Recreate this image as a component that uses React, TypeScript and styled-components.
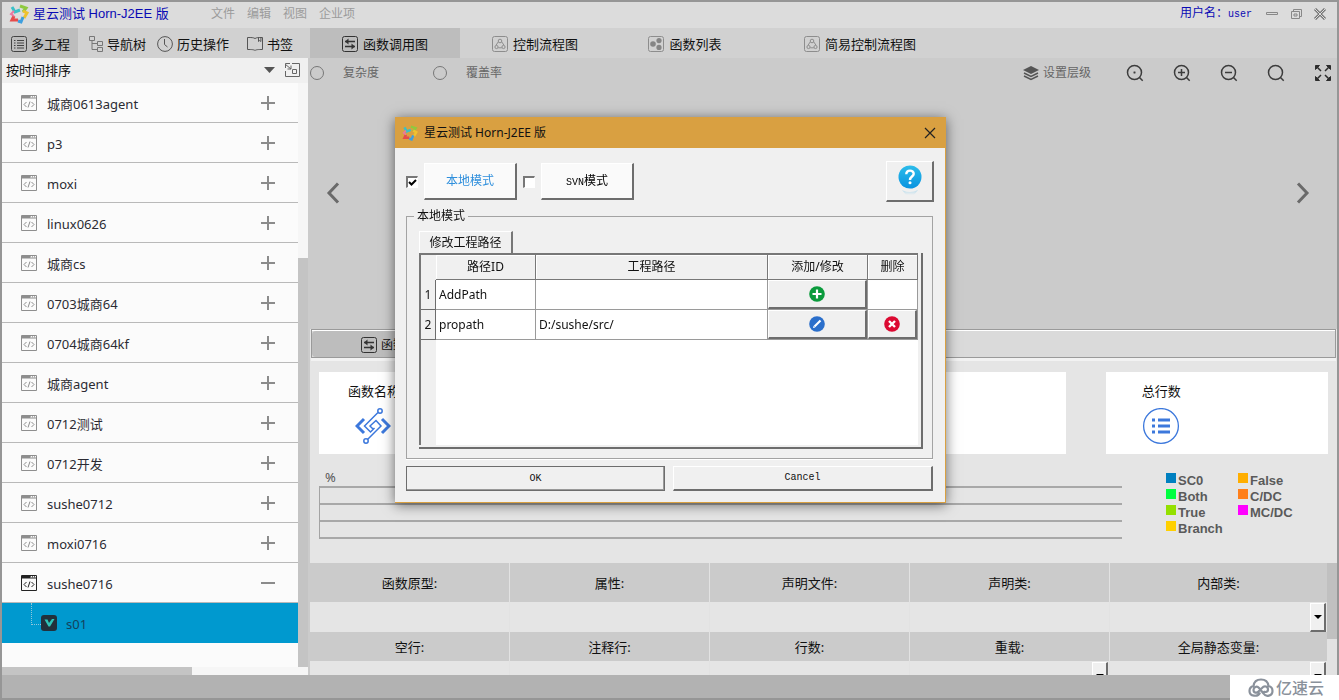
import React from "react";
import styled, { createGlobalStyle, css } from "styled-components";

const sans = `"Noto Sans", "Noto Sans CJK SC", sans-serif`;
const arial = `"Liberation Sans", "Noto Sans CJK SC", sans-serif`;
const mono = `"Liberation Mono", "Noto Sans CJK SC", monospace`;

const Global = createGlobalStyle`
  *, *::before, *::after { box-sizing: border-box; }
  body { margin: 0; font: 13px/20px ${sans}; color: #111; }
  button, select, input { font: inherit; color: inherit; margin: 0; }
  button { padding: 0; border: 0; background: none; }
  svg { display: block; flex: none; }
`;

const raised = css`
  border: solid;
  border-width: 1px 2px 2px 1px;
  border-color: #fff #6d6d6d #6d6d6d #fff;
`;

const Frame = styled.div`
  position: relative;
  display: flex;
  flex-direction: column;
  height: 100vh;
  min-height: 600px;
  border: 2px solid #969696;
  background: #cbcbcb;
  overflow: hidden;
`;

const TitleBar = styled.header`
  display: flex;
  align-items: center;
  flex: none;
  height: 26px;
  padding: 0 9px 3px 7px;
  background: #dcdcdc;
`;

const AppTitle = styled.h1`
  margin: 0 0 0 4px;
  width: 178px;
  font: 13px/20px ${arial};
  color: #0a0ab4;
`;

const Menu = styled.nav`
  display: flex;
  gap: 12px;
  flex: 1;
  font-size: 12px;
  color: #9b9b9b;
`;

const UserName = styled.span`
  font: 12px/20px ${mono};
  color: #0a0ab4;
  margin-right: 12px;
`;

const Narrow = styled.span`
  font: 10px/12px ${mono};
`;

const WindowControls = styled.div`
  display: flex;
  gap: 8px;
`;

const TabBar = styled.nav`
  display: flex;
  flex: none;
  height: 30px;
  background: #d1d1d1;
`;

const SideTabs = styled.div`
  display: flex;
  gap: 11px;
  flex: none;
  width: 308px;
`;

const SideTab = styled.button<{ $active?: boolean }>`
  display: flex;
  align-items: center;
  gap: 4px;
  padding: 2px 0 0;
  ${(p) => p.$active && css`padding: 2px 8px 0 9px; background: #bdbdbd;`}
  &:last-child { margin-left: 7px; }
`;

const ViewTab = styled.button<{ $active?: boolean; $wide?: boolean }>`
  display: flex;
  align-items: center;
  justify-content: center;
  gap: 5px;
  width: ${(p) => (p.$wide ? 200 : 150)}px;
  padding-top: 2px;
  background: ${(p) => (p.$active ? "#bdbdbd" : "transparent")};
`;

const Body = styled.div`
  display: flex;
  flex: 1;
  min-height: 0;
`;

const Sidebar = styled.aside`
  display: flex;
  flex-direction: column;
  flex: none;
  width: 306px;
  margin-right: 2px;
  background: #fbfbfb;
`;

const SortRow = styled.div`
  display: flex;
  align-items: center;
  flex: none;
  height: 25px;
  padding: 0 8px 1px 0;
  gap: 9px;
  background: #f0f0f0;
`;

const SortSelect = styled.select`
  appearance: none;
  flex: 1;
  padding: 0 0 0 4px;
  border: 0;
  background: none;
`;

const ListArea = styled.div`
  display: flex;
  flex: 1;
  min-height: 0;
`;

const ProjectList = styled.ul`
  flex: 1;
  margin: 0;
  padding: 0;
  list-style: none;
  overflow: hidden;
`;

const ProjectRow = styled.li`
  display: flex;
  align-items: center;
  gap: 10px;
  height: 40px;
  padding: 0 23px 0 19px;
  border-bottom: 1px solid #b9b9b9;
  color: #2b2b33;
`;

const RowName = styled.span`
  flex: 1;
  padding-top: 2px;
`;

const ChildRow = styled.li`
  display: flex;
  align-items: center;
  height: 40px;
  padding-left: 29px;
  background: #0099cf;
  color: #14425c;
`;

const Branch = styled.span`
  align-self: flex-start;
  width: 10px;
  height: 22px;
  border: dotted #8fc6dc;
  border-width: 0 0 1px 1px;
`;

const ChildName = styled.span`
  margin-left: 9px;
  padding-top: 2px;
`;

const VTrack = styled.div`
  display: flex;
  flex-direction: column;
  justify-content: flex-end;
  width: 10px;
  background: #f6f6f6;
`;

const VThumb = styled.div`
  height: 70%;
  background: #c4c4c4;
`;

const HTrack = styled.div`
  flex: none;
  height: 8px;
  background: #f6f6f6;
`;

const HThumb = styled.div`
  width: 62%;
  height: 100%;
  background: #c4c4c4;
`;

const Main = styled.main`
  display: flex;
  flex-direction: column;
  flex: 1;
  min-width: 0;
`;

const Canvas = styled.section`
  display: flex;
  flex-direction: column;
  flex: 271 1 0;
  min-height: 0;
`;

const Toolbar = styled.div`
  display: flex;
  align-items: center;
  height: 29px;
  padding-right: 5px;
  font-size: 12px;
  color: #666;
`;

const RadioLabel = styled.label`
  display: flex;
  align-items: center;
  gap: 19px;
  margin-right: 54px;
`;

const Radio = styled.input`
  appearance: none;
  width: 14px;
  height: 14px;
  border: 1px solid #777;
  border-radius: 50%;
`;

const Tools = styled.div`
  display: flex;
  align-items: center;
  gap: 29px;
  margin-left: auto;
`;

const LayerButton = styled.button`
  display: flex;
  align-items: center;
  gap: 4px;
  margin-right: 6px;
`;

const Pager = styled.div`
  display: flex;
  flex: 1;
  align-items: center;
  justify-content: space-between;
  padding: 0 27px 30px 16px;
`;

const Details = styled.section`
  display: flex;
  flex-direction: column;
  flex: 346 1 0;
  min-height: 0;
  background: #e5e5e5;
  overflow: hidden;
`;

const DetailTabs = styled.div`
  display: flex;
  flex: none;
  height: 29px;
  margin: 0 1px;
  border: 1px solid #9a9a9a;
  background: #dadada;
  box-shadow: inset 0 1px #fff, 0 3px #f2f2f2;
`;

const DetailTab = styled.button`
  display: flex;
  align-items: center;
  gap: 4px;
  width: 170px;
  margin-top: 1px;
  padding: 2px 0 0 49px;
  border-radius: 4px 0 0 4px;
  background: #bdbdbd;
  font-size: 12px;
`;

const Cards = styled.div`
  display: flex;
  flex: none;
  gap: 40px;
  margin: 14px 9px 0;
  height: 82px;
`;

const Card = styled.article`
  flex: 1;
  padding: 9px 0 0 36px;
  background: #fff;
`;

const CardTitle = styled.h2<{ $shift?: boolean }>`
  margin: 0 0 7px;
  ${(p) => p.$shift && css`margin-left: -7px;`}
  font: 13px/20px ${sans};
`;

const ChartRow = styled.div`
  display: flex;
  flex: none;
  height: 109px;
  padding-top: 13px;
`;

const Chart = styled.div`
  flex: 1;
  margin-left: 9px;
  color: #555;
`;

const Unit = styled.div`
  height: 19px;
  padding-left: 6px;
`;

const Grid = styled.div`
  height: 53px;
  border-left: 1px solid #a4a4a4;
  display: flex;
  flex-direction: column;
  justify-content: space-between;
`;

const GridLine = styled.div`
  height: 2px;
  background: #a8a8a8;
`;

const Legend = styled.ul`
  display: grid;
  grid-auto-flow: column;
  grid-template-rows: repeat(4, 16px);
  grid-template-columns: 72px 99px;
  flex: none;
  margin: 6px 0 0 44px;
  padding: 0;
  list-style: none;
  font: 700 13px/16px "Liberation Sans", sans-serif;
  color: #5a5a5a;
`;

const LegendItem = styled.li<{ $color: string }>`
  display: flex;
  gap: 2px;
  &::before {
    content: "";
    width: 10px;
    height: 10px;
    background: ${(p) => p.$color};
  }
`;

const InfoArea = styled.div`
  display: flex;
  flex: none;
`;

const InfoTable = styled.table`
  flex: 1;
  table-layout: fixed;
  border-collapse: separate;
  border-spacing: 0;
  th, td { padding: 0; border-right: 1px solid #e2e2e2; }
  th { height: 39px; width: 200px; background: #cbcbcb; font-weight: 400; }
  th:last-child { width: auto; }
  th:last-child, td:last-child { border-right: 0; }
  td { height: 30px; }
  tr:nth-child(3) th { height: 29px; }
`;

const InfoSelect = styled.select`
  appearance: none;
  display: block;
  width: 100%;
  height: 29px;
  border: 0;
  background: none;
`;

const Combo = styled.div`
  position: relative;
`;

const ComboArrow = styled.span`
  ${raised}
  position: absolute;
  top: 0;
  right: 1px;
  display: grid;
  place-items: center;
  width: 16px;
  height: 29px;
  background: #f0f0f0;
  pointer-events: none;
`;

const InfoTrack = styled.div`
  width: 10px;
  background: #e2e2e2;
`;

const InfoThumb = styled.div`
  height: 76px;
  background: #c0c0c0;
`;

const StatusBar = styled.footer`
  flex: none;
  height: 23px;
  background: #b2b2b2;
`;

const Watermark = styled.div`
  position: fixed;
  right: 0;
  bottom: 0;
  display: flex;
  align-items: center;
  gap: 2px;
  width: 109px;
  height: 25px;
  padding-left: 18px;
  background: #fff;
  color: #8a919b;
  font: 500 16px/24px ${sans};
`;

const Overlay = styled.div`
  position: fixed;
  inset: 0;
  display: flex;
  align-items: center;
  justify-content: center;
  padding: 0 0 80px 2px;
`;

const Dialog = styled.section`
  display: flex;
  flex-direction: column;
  width: 551px;
  border: solid #d9a041;
  border-width: 0 1px 1px 0;
  background: #f0f0f0;
  box-shadow: 0 2px 12px rgba(0, 0, 0, 0.55);
  font-size: 12px;
`;

const DialogTitle = styled.header`
  display: flex;
  align-items: center;
  gap: 6px;
  height: 31px;
  padding: 0 9px 0 7px;
  background: #d9a041;
  h2 { flex: 1; margin: 0; font: 12px/20px ${sans}; }
`;

const DialogBody = styled.div`
  padding: 13px 12px 11px 11px;
`;

const ModeRow = styled.div`
  display: flex;
  align-items: center;
  gap: 6px;
`;

const Check = styled.input`
  appearance: none;
  flex: none;
  width: 12px;
  height: 12px;
  border: solid;
  border-width: 2px 1px 1px 2px;
  border-color: #777 #fff #fff #777;
  background: #fff;
  &:checked {
    background: #fff
      url("data:image/svg+xml,%3Csvg xmlns='http://www.w3.org/2000/svg' viewBox='0 0 9 9'%3E%3Cpath d='M1 4l2.5 2.5L8 2' fill='none' stroke='black' stroke-width='2'/%3E%3C/svg%3E")
      center / 9px 9px no-repeat;
  }
`;

const ModeButton = styled.button<{ $on?: boolean }>`
  ${raised}
  width: 93px;
  height: 37px;
  background: #fafafa;
  color: ${(p) => (p.$on ? "#2f8fdc" : "#000")};
`;

const HelpButton = styled.button`
  ${raised}
  display: grid;
  place-items: center;
  width: 48px;
  height: 41px;
  margin: 0 -1px 0 auto;
  background: #f0f0f0;
`;

const Group = styled.fieldset`
  min-width: 0;
  margin: 4px 0 7px;
  padding: 5px 9px 9px 12px;
  border: 1px solid #a3a3a3;
  box-shadow: 0 1px #fff;
  legend { margin-left: -5px; padding: 0 3px; line-height: 20px; }
`;

const PaneTab = styled.button`
  display: block;
  width: 94px;
  height: 22px;
  border: solid;
  border-width: 1px 2px 0 1px;
  border-color: #fff #777 #fff #fff;
`;

const Pane = styled.div`
  height: 196px;
  padding: 0 3px 2px 0;
  border: solid;
  border-width: 0 2px 2px 0;
  border-color: #6d6d6d;
`;

const Sheet = styled.div`
  height: 100%;
  border: solid #777;
  border-width: 2px 0 0 2px;
  background: linear-gradient(to right, #f0f0f0 15px, #fff 15px);
`;

const PathTable = styled.table`
  width: 100%;
  table-layout: fixed;
  border-collapse: separate;
  border-spacing: 0;
  th, td { padding: 0 3px; border: solid #9a9a9a; border-width: 0 1px 1px 0; }
  th { background: #f0f0f0; font-weight: 400; }
  thead th { height: 25px; border-color: #777; box-shadow: inset 1px 1px #fff; }
  thead th:first-child { border-color: #f0f0f0; box-shadow: none; }
  tbody th { padding: 0; border-color: #6d6d6d; }
  td { height: 30px; }
  td.action { padding: 0; }
`;

const CellButton = styled.button`
  ${raised}
  display: grid;
  place-items: center;
  width: 100%;
  height: 29px;
  background: #f0f0f0;
`;

const Actions = styled.div`
  display: flex;
  gap: 8px;
`;

const ActionButton = styled.button<{ $default?: boolean }>`
  ${raised}
  flex: 1;
  height: 25px;
  background: #f0f0f0;
  font: 10px/12px ${mono};
  ${(p) => p.$default && css`border: 1px solid #6d6d6d; box-shadow: inset -1px -1px #999;`}
`;

const Logo = ({ size = 20 }: { size?: number }) => (
  <svg width={size} height={size} viewBox="0 0 20 20" fill="none" strokeWidth="3">
    <path d="M3 3l3 5 5-2" stroke="#39c0c8" />
    <path d="M11 2l6 2-3 4" stroke="#8fc93f" />
    <path d="M14 7l4 2-3 5" stroke="#efc22e" />
    <path d="M14 13l-2 5-3-1" stroke="#3d9fdf" />
    <path d="M9 16l-6 0 2-4" stroke="#e54b4b" />
    <path d="M5 12L2 10l3-3" stroke="#e878a0" strokeWidth="2" />
  </svg>
);

const ListIcon = () => (
  <svg width="16" height="16" viewBox="0 0 16 16" fill="none" stroke="#444">
    <rect x=".5" y=".5" width="15" height="15" rx="2" />
    <path d="M3 4.500h1.500M6 4.500h7M3 7h1.500M6 7h7M3 9.500h1.500M6 9.500h7M3 12h1.500M6 12h7" />
  </svg>
);

const TreeIcon = () => (
  <svg width="14" height="16" viewBox="0 0 14 16" fill="none" stroke="#777">
    <path d="M.5.500h5v4h-5zM8.500 5.500h5v4h-5zM8.500 11.500h5v4h-5zM3 4.500V13.500h5.500M3 7.500h5.500" />
  </svg>
);

const ClockIcon = () => (
  <svg width="16" height="16" viewBox="0 0 16 16" fill="none" stroke="#555">
    <circle cx="8" cy="8" r="7.400" />
    <path d="M7.500 3v5.500l3 2.500" />
  </svg>
);

const BookIcon = () => (
  <svg width="16" height="16" viewBox="0 0 16 14" fill="none" stroke="#555">
    <path d="M8 13.500C6.500 12.500 5 12.500.5 12.500v-12c4 0 6 0 7.500 1 1.500-1 3.500-1 7.500-1v12c-4.500 0-6 0-7.500 1zM11.500.500v4l1.200-1 1.200 1v-4" />
  </svg>
);

const SwapIcon = () => (
  <svg width="16" height="16" viewBox="0 0 16 16" fill="none" stroke="#333">
    <rect x=".5" y=".5" width="15" height="15" rx="2" />
    <path d="M3 5.500h10M3 10.500h10" strokeWidth="1.500" />
    <path d="M6.500 2.500L3 5.500l3.500 3zM9.500 7.500l3.500 3-3.500 3z" fill="#333" stroke="none" />
  </svg>
);

const FlowIcon = () => (
  <svg width="16" height="16" viewBox="0 0 16 16" fill="none" stroke="#8d8d8d">
    <rect x=".5" y=".5" width="15" height="15" rx="2" />
    <circle cx="8" cy="5" r="1.800" />
    <circle cx="4.500" cy="11" r="1.600" />
    <circle cx="11.500" cy="11" r="1.600" />
    <path d="M6.200 6L4 9.200M9.800 6L12 9.200M6.200 11.800h3.600" />
  </svg>
);

const DotsIcon = () => (
  <svg width="16" height="16" viewBox="0 0 16 16" fill="#858585">
    <rect x=".5" y=".5" width="15" height="15" rx="2" fill="none" stroke="#8d8d8d" />
    <circle cx="5" cy="8" r="2.800" />
    <circle cx="11" cy="4.600" r="2.600" />
    <circle cx="11" cy="11.400" r="2.600" />
  </svg>
);

const CodeIcon = ({ color = "#8e8e8e" }: { color?: string }) => (
  <svg width="16" height="16" viewBox="0 0 16 16" fill="none" stroke={color}>
    <path d="M.5.5h15v15H.5z" />
    <path d="M1 2h8" strokeWidth="3" />
    <path d="M9 .5h6M9 3h6" />
    <path d="M9 1.800h6" strokeDasharray="1 1" />
    <path d="M5.500 7L3 9.500 5.500 12M10.500 7L13 9.500 10.500 12M9 6.500l-2 6" />
  </svg>
);

const PlusMinus = ({ open }: { open?: boolean }) => (
  <svg width="14" height="14" viewBox="0 0 14 14" stroke="#8b8b8b" strokeWidth="2">
    <path d={open ? "M0 7h14" : "M0 7h14M7 0v14"} />
  </svg>
);

const Mag = ({ mark }: { mark: string }) => (
  <svg width="18" height="18" viewBox="0 0 18 18" fill="none" stroke="#3c3c3c" strokeWidth="1.500">
    <circle cx="8.500" cy="8.500" r="7" />
    <path d={"M13.500 13.500l3.200 3.200" + mark} />
  </svg>
);

const Chevron = ({ flip }: { flip?: boolean }) => (
  <svg width="14" height="22" viewBox="0 0 14 22" fill="none" stroke="#6a6a6a" strokeWidth="3">
    <path d={flip ? "M2 1.500l9 9.500-9 9.500" : "M12 1.500L3 11l9 9.500"} />
  </svg>
);

const Arrow = () => (
  <svg width="8" height="4" viewBox="0 0 8 4"><path d="M0 0h8L4 4z" /></svg>
);

const projects = ["城商0613agent", "p3", "moxi", "linux0626", "城商cs", "0703城商64", "0704城商64kf", "城商agent", "0712测试", "0712开发", "sushe0712", "moxi0716", "sushe0716"];

const legend: [string, string][] = [
  ["SC0", "#0080c0"], ["Both", "#00ff40"], ["True", "#94e000"], ["Branch", "#ffd000"],
  ["False", "#ffae00"], ["C/DC", "#ff7f1a"], ["MC/DC", "#ff00ff"],
];

const InfoCombo = ({ label }: { label: string }) => (
  <Combo>
    <InfoSelect aria-label={label} />
    <ComboArrow><Arrow /></ComboArrow>
  </Combo>
);

const PathDialog = () => (
  <Overlay>
    <Dialog role="dialog" aria-labelledby="dlg">
      <DialogTitle>
        <Logo size={16} />
        <h2 id="dlg">星云测试 Horn-J2EE 版</h2>
        <button aria-label="关闭">
          <svg width="12" height="12" viewBox="0 0 12 12" stroke="#222" strokeWidth="1.200"><path d="M1 1l10 10M11 1L1 11" /></svg>
        </button>
      </DialogTitle>
      <DialogBody>
        <ModeRow>
          <Check type="checkbox" defaultChecked aria-label="本地模式" />
          <ModeButton $on>本地模式</ModeButton>
          <Check type="checkbox" aria-label="SVN模式" />
          <ModeButton><Narrow>SVN</Narrow>模式</ModeButton>
          <HelpButton aria-label="帮助">
            <svg width="24" height="32" viewBox="0 0 24 32">
              <defs>
                <linearGradient id="hb" x1="0" y1="0" x2="0" y2="1"><stop stopColor="#2cbcea" /><stop offset="1" stopColor="#0a93e0" /></linearGradient>
                <linearGradient id="hs" x1="0" y1="0" x2="0" y2="1"><stop stopColor="#b9dcec" /><stop offset="1" stopColor="#f0f0f0" /></linearGradient>
              </defs>
              <path d="M4 25q8 4 16 0l-4 5h-8z" fill="url(#hs)" />
              <circle cx="12" cy="12" r="11.500" fill="url(#hb)" />
              <path d="M8.300 9.300c0-5 7.600-4.700 7.400-.4-.1 2.600-3.700 2.800-3.700 6" fill="none" stroke="#fff" strokeWidth="2.400" />
              <circle cx="12" cy="17.800" r="1.500" fill="#fff" />
            </svg>
          </HelpButton>
        </ModeRow>
        <Group>
          <legend>本地模式</legend>
          <PaneTab>修改工程路径</PaneTab>
          <Pane>
            <Sheet>
              <PathTable>
                <colgroup>
                  <col style={{ width: 15 }} /><col style={{ width: 100 }} /><col /><col style={{ width: 100 }} /><col style={{ width: 50 }} />
                </colgroup>
                <thead>
                  <tr><th /><th>路径ID</th><th>工程路径</th><th>添加/修改</th><th>删除</th></tr>
                </thead>
                <tbody>
                  <tr>
                    <th>1</th><td>AddPath</td><td />
                    <td className="action">
                      <CellButton aria-label="添加">
                        <svg width="16" height="16" viewBox="0 0 16 16"><circle cx="8" cy="8" r="7.800" fill="#0b9b3c" /><path d="M8 3.500v9M3.500 8h9" stroke="#fff" strokeWidth="2.200" /></svg>
                      </CellButton>
                    </td>
                    <td />
                  </tr>
                  <tr>
                    <th>2</th><td>propath</td><td>D:/sushe/src/</td>
                    <td className="action">
                      <CellButton aria-label="修改">
                        <svg width="16" height="16" viewBox="0 0 16 16"><circle cx="8" cy="8" r="7.800" fill="#2b6fcb" /><path d="M5.500 10.500L11.500 4.500" stroke="#fff" strokeWidth="2.200" /><path d="M4 12l.6-2.300 1.700 1.700z" fill="#fff" /></svg>
                      </CellButton>
                    </td>
                    <td className="action">
                      <CellButton aria-label="删除">
                        <svg width="16" height="16" viewBox="0 0 16 16"><circle cx="8" cy="8" r="7.800" fill="#dc0a32" /><path d="M5 5l6 6M11 5l-6 6" stroke="#fff" strokeWidth="2.400" /></svg>
                      </CellButton>
                    </td>
                  </tr>
                </tbody>
              </PathTable>
            </Sheet>
          </Pane>
        </Group>
        <Actions>
          <ActionButton $default>OK</ActionButton>
          <ActionButton>Cancel</ActionButton>
        </Actions>
      </DialogBody>
    </Dialog>
  </Overlay>
);

export default function App() {
  return (
    <>
      <Global />
      <Frame>
        <TitleBar>
          <Logo />
          <AppTitle>星云测试 Horn-J2EE 版</AppTitle>
          <Menu>
            {["文件", "编辑", "视图", "企业项"].map((m) => <button key={m}>{m}</button>)}
          </Menu>
          <UserName>用户名：<Narrow>user</Narrow></UserName>
          <WindowControls>
            <button aria-label="最小化"><svg width="16" height="12" viewBox="0 0 16 12" fill="none" stroke="#888"><path d="M2.500 4.500h11v2h-11z" /></svg></button>
            <button aria-label="还原"><svg width="16" height="12" viewBox="0 0 16 12" fill="none" stroke="#888"><path d="M5.500 3.500v-2h8v7h-2M3.500 3.500h8v7h-8zM6 6h3v2H6z" /></svg></button>
            <button aria-label="关闭窗口"><svg width="16" height="12" viewBox="0 0 16 12" fill="none" stroke="#777"><path d="M3 1l10 10M13 1L3 11" strokeWidth="3" /><path d="M3 1l10 10M13 1L3 11" stroke="#dcdcdc" /></svg></button>
          </WindowControls>
        </TitleBar>
        <TabBar>
          <SideTabs>
            <SideTab $active><ListIcon />多工程</SideTab>
            <SideTab><TreeIcon />导航树</SideTab>
            <SideTab><ClockIcon />历史操作</SideTab>
            <SideTab><BookIcon />书签</SideTab>
          </SideTabs>
          <ViewTab $active><SwapIcon />函数调用图</ViewTab>
          <ViewTab><FlowIcon />控制流程图</ViewTab>
          <ViewTab><DotsIcon />函数列表</ViewTab>
          <ViewTab $wide><FlowIcon />简易控制流程图</ViewTab>
        </TabBar>
        <Body>
          <Sidebar>
            <SortRow>
              <SortSelect aria-label="排序"><option>按时间排序</option></SortSelect>
              <svg width="11" height="6" viewBox="0 0 11 6"><path d="M0 0h11L5.500 6z" fill="#555" /></svg>
              <button aria-label="导入">
                <svg width="16" height="16" viewBox="0 0 16 16" fill="none" stroke="#666">
                  <path d="M8 1.500h7.500v13H1.500V9M8.500 7.500h4v4h-4zM1 2l6 5M1.500 6V1.500H6M7 3.500V7H3.500" />
                </svg>
              </button>
            </SortRow>
            <ListArea>
              <ProjectList>
                {projects.map((name, i) => {
                  const open = i === projects.length - 1;
                  return (
                    <ProjectRow key={name}>
                      <CodeIcon color={open ? "#222" : undefined} />
                      <RowName>{name}</RowName>
                      <button aria-label={open ? "收起" : "展开"}><PlusMinus open={open} /></button>
                    </ProjectRow>
                  );
                })}
                <ChildRow>
                  <Branch />
                  <svg width="16" height="16" viewBox="0 0 16 16"><rect width="16" height="16" rx="3" fill="#22303c" /><path d="M3.500 4.500h3L8 8l3-4h2.500L9 11.500H7.500z" fill="#2fc4b8" /></svg>
                  <ChildName>s01</ChildName>
                </ChildRow>
              </ProjectList>
              <VTrack><VThumb /></VTrack>
            </ListArea>
            <HTrack><HThumb /></HTrack>
          </Sidebar>
          <Main>
            <Canvas>
              <Toolbar>
                <RadioLabel><Radio type="radio" name="metric" />复杂度</RadioLabel>
                <RadioLabel><Radio type="radio" name="metric" />覆盖率</RadioLabel>
                <Tools>
                  <LayerButton>
                    <svg width="16" height="16" viewBox="0 0 16 16" fill="#555"><path d="M8 1l8 4-8 4-8-4z" /><path d="M1 8l7 3.500L15 8M1 11l7 3.500 7-3.500" fill="none" stroke="#555" strokeWidth="1.500" /></svg>
                    设置层级
                  </LayerButton>
                  <button aria-label="定位"><Mag mark="M7.500 8.500h2M8.500 7.500v2" /></button>
                  <button aria-label="放大"><Mag mark="M5 8.500h7M8.500 5v7" /></button>
                  <button aria-label="缩小"><Mag mark="M5 8.500h7" /></button>
                  <button aria-label="搜索"><Mag mark="" /></button>
                  <button aria-label="全屏">
                    <svg width="18" height="18" viewBox="0 0 18 18" fill="#2d2d2d" stroke="#2d2d2d"><path d="M1.500 1.500h4l-4 4zM16.500 1.500v4l-4-4zM1.500 16.500v-4l4 4zM16.500 16.500h-4l4-4z" /><path d="M2 2l5 5M16 2l-5 5M2 16l5-5M16 16l-5-5" strokeWidth="1.500" /></svg>
                  </button>
                </Tools>
              </Toolbar>
              <Pager>
                <button aria-label="上一个"><Chevron /></button>
                <button aria-label="下一个"><Chevron flip /></button>
              </Pager>
            </Canvas>
            <Details>
              <DetailTabs><DetailTab><SwapIcon />函数信息</DetailTab></DetailTabs>
              <Cards>
                <Card>
                  <CardTitle $shift>函数名称</CardTitle>
                  <svg width="36" height="36" viewBox="0 0 36 36" fill="none" stroke="#3c78dc" strokeWidth="1.500">
                    <path d="M9 11l-7 7 7 7M27 11l7 7-7 7" strokeWidth="3" />
                    <path d="M23 4.500L9.500 18l6 6 4-4M12.500 31.500L26 18l-5-5.500-6 5.500 3 3" />
                    <circle cx="25" cy="3" r="2.200" />
                    <circle cx="11" cy="33" r="2.200" />
                  </svg>
                </Card>
                <Card />
                <Card />
                <Card>
                  <CardTitle>总行数</CardTitle>
                  <svg width="38" height="38" viewBox="0 0 38 38" fill="none" stroke="#3c78dc">
                    <circle cx="19" cy="18" r="17.400" strokeWidth="1.300" />
                    <path d="M10 12h3M16 12h12M10 18h3M16 18h12M10 24h3M16 24h12" strokeWidth="3" />
                  </svg>
                </Card>
              </Cards>
              <ChartRow>
                <Chart>
                  <Unit>%</Unit>
                  <Grid><GridLine /><GridLine /><GridLine /><GridLine /></Grid>
                </Chart>
                <Legend>
                  {legend.map(([name, color]) => <LegendItem key={name} $color={color}>{name}</LegendItem>)}
                </Legend>
              </ChartRow>
              <InfoArea>
                <InfoTable>
                  <tbody>
                    <tr><th>函数原型:</th><th>属性:</th><th>声明文件:</th><th>声明类:</th><th>内部类:</th></tr>
                    <tr><td /><td /><td /><td /><td><InfoCombo label="内部类" /></td></tr>
                    <tr><th>空行:</th><th>注释行:</th><th>行数:</th><th>重载:</th><th>全局静态变量:</th></tr>
                    <tr><td /><td /><td /><td><InfoCombo label="重载" /></td><td><InfoCombo label="全局静态变量" /></td></tr>
                  </tbody>
                </InfoTable>
                <InfoTrack><InfoThumb /></InfoTrack>
              </InfoArea>
            </Details>
          </Main>
        </Body>
        <StatusBar />
        <PathDialog />
        <Watermark>
          <svg width="26" height="20" viewBox="0 0 26 20" fill="none" stroke="#8a919b" strokeWidth="2.200">
            <path d="M12 14.500c-2 5-10.500 4-10.500-1.500 0-3 2-4.500 4-5C6 4 9 1.500 13 1.500S20 4 20.500 8c2.500.5 4 2.500 4 5 0 5-6.500 6.500-9 2.500L11 10c-2-2.500-5.500-1-5.500 2s3.500 3.500 5 1.500L14 10c2.500-3 6-1.500 6 1.500s-3.500 3-4.500 1.500" />
          </svg>
          亿速云
        </Watermark>
      </Frame>
    </>
  );
}
